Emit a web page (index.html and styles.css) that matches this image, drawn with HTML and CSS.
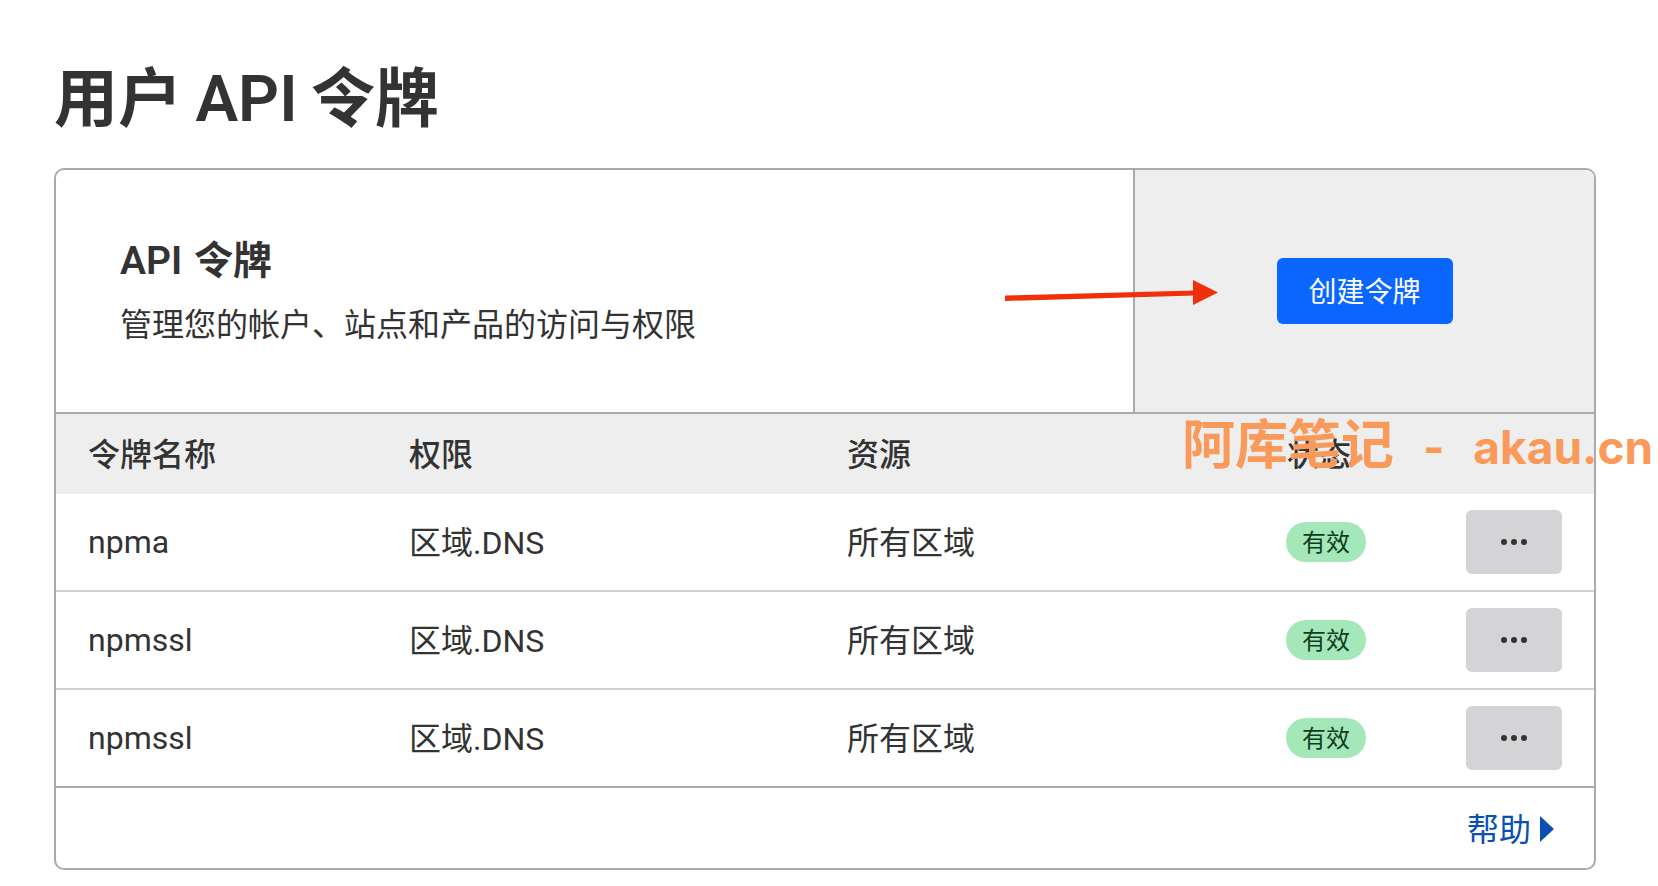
FILE: index.html
```html
<!DOCTYPE html>
<html lang="zh-CN">
<head>
  <meta charset="UTF-8">
  <meta name="viewport" content="width=device-width, initial-scale=1">
  <title>用户 API 令牌</title>
  <link rel="stylesheet" href="styles.css">
</head>
<body>

<h1 class="page-title">用户 API 令牌</h1>

<div class="card">
  <div class="card-top">
    <div class="intro">
      <h2>API 令牌</h2>
      <p>管理您的帐户、站点和产品的访问与权限</p>
    </div>
    <div class="actions">
      <button class="btn-create">创建令牌</button>
    </div>
  </div>

  <div class="row row-head">
    <div class="zh">令牌名称</div>
    <div class="zh">权限</div>
    <div class="zh">资源</div>
    <div class="zh">状态</div>
    <div></div>
  </div>

  <div class="row">
    <div>npma</div>
    <div class="zh">区域.DNS</div>
    <div class="zh">所有区域</div>
    <div><span class="badge">有效</span></div>
    <button class="btn-more" aria-label="更多"><i></i><i></i><i></i></button>
  </div>
  <div class="row">
    <div>npmssl</div>
    <div class="zh">区域.DNS</div>
    <div class="zh">所有区域</div>
    <div><span class="badge">有效</span></div>
    <button class="btn-more" aria-label="更多"><i></i><i></i><i></i></button>
  </div>
  <div class="row">
    <div>npmssl</div>
    <div class="zh">区域.DNS</div>
    <div class="zh">所有区域</div>
    <div><span class="badge">有效</span></div>
    <button class="btn-more" aria-label="更多"><i></i><i></i><i></i></button>
  </div>

  <div class="card-foot">
    <a class="help" href="#">帮助<span class="caret"></span></a>
  </div>
</div>

<!-- red arrow and watermark sit on top of the screenshot -->
<svg class="arrow" width="220" height="30" viewBox="0 0 220 30">
  <path d="M0 15.5 L190 10.5 L190 15.5 L0 21 Z" fill="#f0300a"/>
  <path d="M188 0 L213 12.5 L188 25 Z" fill="#f0300a"/>
</svg>
<div class="watermark"><span class="watermark-cn">阿库笔记</span> - akau.cn</div>

</body>
</html>
```

FILE: styles.css
```css
* {
  box-sizing: border-box;
}

body {
  margin: 0;
  padding: 0 62px 17px 54px;
  background-color: #ffffff;
  color: #333333;
  font-family: Roboto, "Noto Sans CJK SC", sans-serif;
  font-size: 32px;
  position: relative;
}

.page-title {
  margin: 0;
  height: 168px;
  padding-top: 61px;
  font-size: 64px;
  line-height: 78px;
  font-weight: 600;
  word-spacing: -2.5px;
}

.card {
  border: 2px solid #aaaaaa;
  border-radius: 10px;
  overflow: hidden;
}

.card-top {
  display: flex;
  height: 244px;
  border-bottom: 2px solid #aaaaaa;
}

.intro {
  width: 1079px;
  padding-left: 64px;
  padding-top: 3px;
  border-right: 2px solid #aaaaaa;
  display: flex;
  flex-direction: column;
  justify-content: center;
}

.intro h2 {
  margin: 0 0 15px;
  font-size: 39px;
  line-height: 50px;
  font-weight: 600;
  word-spacing: 2px;
}

.intro p {
  margin: 0;
  line-height: 48px;
}

.actions {
  flex: 1;
  background-color: #efeeef;
  display: flex;
  align-items: center;
  justify-content: center;
}

.btn-create {
  width: 176px;
  height: 66px;
  border: none;
  border-radius: 6px;
  padding: 0 0 2px;
  background-color: #0a66ff;
  color: #ffffff;
  font-family: inherit;
  font-size: 28px;
}

.row {
  display: grid;
  grid-template-columns: 321px 438px 440px 179px 96px;
  align-items: center;
  height: 98px;
  padding-left: 32px;
  border-bottom: 2px solid #d2d2d2;
}

.row:nth-last-child(2) {
  border-bottom-color: #aaaaaa;
}

.row-head {
  height: 80px;
  background-color: #efeeef;
  border-bottom: none;
  font-weight: 500;
}

/* CJK glyphs sit a bit low next to Roboto */
.zh {
  padding-bottom: 4px;
}

.badge {
  display: block;
  width: 80px;
  height: 40px;
  border-radius: 20px;
  background-color: #a4e7b9;
  color: #0f3d1e;
  font-size: 24px;
  line-height: 42px;
  text-align: center;
  margin-left: -1px;
}

.btn-more {
  width: 96px;
  height: 64px;
  border: none;
  border-radius: 6px;
  background-color: #d4d3d5;
  display: flex;
  align-items: center;
  justify-content: center;
  gap: 4px;
  padding: 0;
}

.btn-more i {
  width: 6px;
  height: 6px;
  border-radius: 50%;
  background-color: #333333;
}

.card-foot {
  height: 80px;
  padding-right: 40px;
  display: flex;
  align-items: center;
  justify-content: flex-end;
}

.help {
  display: flex;
  align-items: center;
  gap: 9px;
  color: #0b4fb3;
  font-size: 32px;
  line-height: 40px;
  padding-top: 3px;
  text-decoration: none;
}

.caret {
  width: 0;
  height: 0;
  margin-top: -1px;
  border-left: 14px solid #0b4fb3;
  border-top: 13px solid transparent;
  border-bottom: 13px solid transparent;
}

.arrow {
  position: absolute;
  left: 1005px;
  top: 280px;
}

.watermark {
  position: absolute;
  left: 1182px;
  top: 414px;
  font-family: Inter, "Noto Sans CJK SC", sans-serif;
  font-size: 46px;
  line-height: 62px;
  font-weight: 700;
  word-spacing: 18px;
  color: #fa9a5a;
  white-space: nowrap;
}

.watermark-cn {
  font-size: 53px;
}
```
